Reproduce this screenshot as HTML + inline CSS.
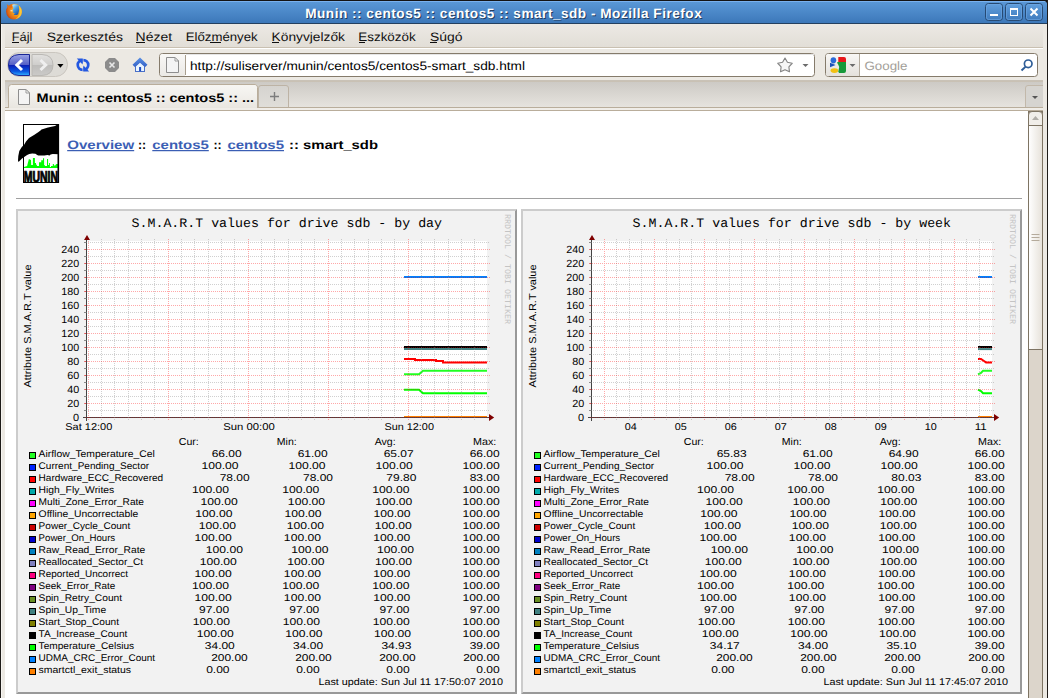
<!DOCTYPE html><html><head><meta charset="utf-8"><title>Munin :: centos5 :: centos5 :: smart_sdb</title><style>html,body{margin:0;padding:0;width:1048px;height:698px;overflow:hidden;background:#fff}svg{display:block}text{text-rendering:geometricPrecision}</style></head><body><svg width="1048" height="698" viewBox="0 0 1048 698"><rect x="0" y="0" width="1048" height="698" fill="#ece9e3"/><defs><linearGradient id="tb" x1="0" y1="0" x2="0" y2="1"><stop offset="0" stop-color="#5c9ad9"/><stop offset="1" stop-color="#3b76b8"/></linearGradient><linearGradient id="tabbar" x1="0" y1="0" x2="0" y2="1"><stop offset="0" stop-color="#cdcac5"/><stop offset="1" stop-color="#e7e4df"/></linearGradient><linearGradient id="acttab" x1="0" y1="0" x2="0" y2="1"><stop offset="0" stop-color="#f7f6f3"/><stop offset="0.5" stop-color="#f1efeb"/><stop offset="1" stop-color="#e9e6e0"/></linearGradient><linearGradient id="newtab" x1="0" y1="0" x2="0" y2="1"><stop offset="0" stop-color="#d5d3cf"/><stop offset="1" stop-color="#e0ded9"/></linearGradient><linearGradient id="thumb" x1="0" y1="0" x2="1" y2="0"><stop offset="0" stop-color="#ffffff"/><stop offset="1" stop-color="#e6e1d9"/></linearGradient><linearGradient id="back" x1="0" y1="0" x2="0" y2="1"><stop offset="0" stop-color="#8c9be8"/><stop offset="0.45" stop-color="#5d6fd6"/><stop offset="0.5" stop-color="#0d3fd0"/><stop offset="1" stop-color="#2a8cf5"/></linearGradient><linearGradient id="fwd" x1="0" y1="0" x2="0" y2="1"><stop offset="0" stop-color="#dcdcdc"/><stop offset="1" stop-color="#c4c4c4"/></linearGradient><linearGradient id="wbtn" x1="0" y1="0" x2="0" y2="1"><stop offset="0" stop-color="#62a0de"/><stop offset="1" stop-color="#3f7bbd"/></linearGradient></defs><rect x="0" y="0" width="1048" height="24" fill="url(#tb)"/><rect x="0" y="0" width="1048" height="1" fill="#141414"/><rect x="1" y="1" width="1046" height="1" fill="#79b1ee"/><rect x="0" y="23" width="1048" height="1" fill="#24405f"/><path d="M0 0 H4 Q0.5 0.5 0 4.5 Z" fill="#141414"/><path d="M1048 0 H1042 Q1047 0.8 1048 5.5 Z" fill="#141414"/><text x="306.2" y="19" font-family="Liberation Sans" font-weight="bold" font-size="13.6" fill="#1d3352" fill-opacity="0.9" textLength="396.5" lengthAdjust="spacing">Munin :: centos5 :: centos5 :: smart_sdb - Mozilla Firefox</text><text x="305.2" y="18" font-family="Liberation Sans" font-weight="bold" font-size="13.6" fill="#ffffff" textLength="396.5" lengthAdjust="spacing">Munin :: centos5 :: centos5 :: smart_sdb - Mozilla Firefox</text><defs><radialGradient id="ffg" cx="0.68" cy="0.42" r="0.75"><stop offset="0" stop-color="#ffe040"/><stop offset="0.35" stop-color="#f7a21e"/><stop offset="0.75" stop-color="#e06a14"/><stop offset="1" stop-color="#b8380c"/></radialGradient><linearGradient id="ffb" x1="0.2" y1="0" x2="0.8" y2="1"><stop offset="0" stop-color="#b4ecff"/><stop offset="0.4" stop-color="#4aa0e4"/><stop offset="1" stop-color="#1a4a9e"/></linearGradient></defs><circle cx="14" cy="11.6" r="7.9" fill="url(#ffg)"/><path d="M12.4 4.4 Q16 3.6 18.8 5.4 Q20 10 18.2 14.2 Q16 15.6 13.6 14.8 L14.8 13.2 L12.6 12.4 L13.4 11.2 L12.2 9.6 L13.6 8.4 L12.4 6.6 Z" fill="url(#ffb)"/><path d="M18.6 5.4 Q22 8.5 21.8 12.4 Q21.2 17.6 15.4 19.2 Q19.8 15.6 19.9 11.4 Q19.8 7.8 18.6 5.4 Z" fill="#ffd23a" opacity="0.8"/><path d="M6.8 4 L9.2 6.2 L11.2 5 L12.6 6.8 L11 8.4 L9.6 8 L8.4 9.6 Q7.2 7.6 6.8 4 Z" fill="#e66f16"/><path d="M10.2 10.2 L12.4 9.8 L12.8 11.2 L10.8 11.6 Z" fill="#ffd9a0"/><rect x="985.5" y="3.5" width="17" height="17" rx="3" fill="url(#wbtn)" stroke="#274a73"/><rect x="986.5" y="4.5" width="15" height="15" rx="2" fill="none" stroke="#6ea7e3" stroke-opacity="0.6"/><rect x="1005.5" y="3.5" width="17" height="17" rx="3" fill="url(#wbtn)" stroke="#274a73"/><rect x="1006.5" y="4.5" width="15" height="15" rx="2" fill="none" stroke="#6ea7e3" stroke-opacity="0.6"/><rect x="1025.5" y="3.5" width="17" height="17" rx="3" fill="url(#wbtn)" stroke="#274a73"/><rect x="1026.5" y="4.5" width="15" height="15" rx="2" fill="none" stroke="#6ea7e3" stroke-opacity="0.6"/><rect x="990" y="14" width="8" height="2" fill="#fff"/><rect x="1010.5" y="8.5" width="7" height="7" fill="none" stroke="#fff"/><rect x="1010" y="8" width="8" height="2" fill="#fff"/><path d="M1030.5 8.5 L1037.5 15.5 M1037.5 8.5 L1030.5 15.5" stroke="#fff" stroke-width="2"/><rect x="0" y="0" width="1" height="698" fill="#1e1b18"/><rect x="1047" y="0" width="1" height="698" fill="#1e1b18"/><rect x="1" y="24" width="1" height="674" fill="#f7f5f1"/><defs><linearGradient id="menug" x1="0" y1="0" x2="0" y2="1"><stop offset="0" stop-color="#ece9e4"/><stop offset="1" stop-color="#e2ded7"/></linearGradient></defs><rect x="5" y="24" width="1038" height="23" fill="url(#menug)"/><rect x="5" y="47" width="1038" height="1" fill="#c9c0b1"/><rect x="5" y="48" width="1038" height="1" fill="#ffffff"/><text x="11.8" y="41" font-family="Liberation Sans" font-size="12.2" fill="#101010" textLength="20.6" lengthAdjust="spacingAndGlyphs">Fájl</text><text x="46.8" y="41" font-family="Liberation Sans" font-size="12.2" fill="#101010" textLength="76.1" lengthAdjust="spacingAndGlyphs">Szerkesztés</text><text x="135.6" y="41" font-family="Liberation Sans" font-size="12.2" fill="#101010" textLength="36.5" lengthAdjust="spacingAndGlyphs">Nézet</text><text x="185.70000000000002" y="41" font-family="Liberation Sans" font-size="12.2" fill="#101010" textLength="72.0" lengthAdjust="spacingAndGlyphs">Előzmények</text><text x="271.59999999999997" y="41" font-family="Liberation Sans" font-size="12.2" fill="#101010" textLength="73.40000000000003" lengthAdjust="spacingAndGlyphs">Könyvjelzők</text><text x="358.29999999999995" y="41" font-family="Liberation Sans" font-size="12.2" fill="#101010" textLength="57.400000000000034" lengthAdjust="spacingAndGlyphs">Eszközök</text><text x="429.9" y="41" font-family="Liberation Sans" font-size="12.2" fill="#101010" textLength="32.5" lengthAdjust="spacingAndGlyphs">Súgó</text><rect x="12" y="42" width="7" height="1" fill="#101010"/><rect x="56" y="42" width="7" height="1" fill="#101010"/><rect x="136" y="42" width="9" height="1" fill="#101010"/><rect x="210" y="42" width="11" height="1" fill="#101010"/><rect x="272" y="42" width="7" height="1" fill="#101010"/><rect x="359" y="42" width="6" height="1" fill="#101010"/><rect x="430" y="42" width="7" height="1" fill="#101010"/><rect x="2" y="49" width="1045" height="31" fill="#ece9e3"/><rect x="5" y="80" width="1038" height="1" fill="#c9c2b7"/><defs><linearGradient id="back2" x1="0" y1="0" x2="0" y2="1"><stop offset="0" stop-color="#9aa3e6"/><stop offset="0.48" stop-color="#5560c6"/><stop offset="0.5" stop-color="#0a1cb4"/><stop offset="0.8" stop-color="#0a55e0"/><stop offset="1" stop-color="#30b0ff"/></linearGradient><linearGradient id="fwd2" x1="0" y1="0" x2="0" y2="1"><stop offset="0" stop-color="#e2e1df"/><stop offset="0.48" stop-color="#cfcecc"/><stop offset="0.5" stop-color="#bdbcba"/><stop offset="1" stop-color="#cbcac8"/></linearGradient></defs><rect x="7.5" y="52.5" width="60" height="24" rx="12" fill="#dddbd6" stroke="#cac6bf"/><path d="M29.5 54.5 H19 Q8.5 55 8.5 65 Q8.5 75 19 75.5 H29.5 Z" fill="url(#back2)" stroke="#1a2696"/><path d="M32 54.5 H42 Q53 55 53 65 Q53 75 42 75.5 H32 Z" fill="url(#fwd2)" stroke="#bab8b4"/><path d="M22 60 L16.8 65 L22 70" fill="none" stroke="#fff" stroke-width="3" stroke-linejoin="miter"/><path d="M40.5 60 L45.7 65 L40.5 70" fill="none" stroke="#efefef" stroke-width="3" stroke-linejoin="miter"/><path d="M57.3 64 H63.5 L60.4 67.8 Z" fill="#000"/><g fill="#2458e0"><path d="M82.6 58.8 A6.2 6.2 0 0 0 82.6 71.2 V68.5 A3.5 3.5 0 0 1 81.2 61.8 L82.6 63.6 Z"/><path d="M76.8 58.6 H82.6 V64.4 Z"/><path d="M83.4 71.2 A6.2 6.2 0 0 0 83.4 58.8 V61.5 A3.5 3.5 0 0 1 84.8 68.2 L83.4 66.4 Z"/><path d="M89.2 71.4 H83.4 V65.6 Z"/></g><path d="M109 58 H115 L119 62 V68 L115 72 H109 L105 68 V62 Z" fill="#8c8c8c"/><path d="M109.5 62.5 L114.5 67.5 M114.5 62.5 L109.5 67.5" stroke="#e8e8e8" stroke-width="1.6"/><defs><linearGradient id="roof" x1="0" y1="0" x2="0" y2="1"><stop offset="0" stop-color="#5a90e4"/><stop offset="1" stop-color="#3463c8"/></linearGradient></defs><path d="M135 65.5 L140 61.3 L145 65.5 V72 H135 Z" fill="#4a70c8"/><path d="M136 66.2 L140 62.8 L144 66.2 V71 H136 Z" fill="#eaf5ff"/><rect x="139.1" y="67" width="2" height="4.2" fill="#1d4cc4"/><path d="M140 57.5 L147.5 64.8 L145.2 67 L140 62.3 L134.8 67 L132.5 64.8 Z" fill="url(#roof)"/><rect x="159.5" y="53.5" width="655" height="23" rx="3" fill="#ffffff" stroke="#857b6b"/><defs><linearGradient id="ufav" x1="0" y1="0" x2="0" y2="1"><stop offset="0" stop-color="#f9f8f6"/><stop offset="1" stop-color="#ebe9e5"/></linearGradient></defs><path d="M160 56.5 A2.5 2.5 0 0 1 162.5 54 H185 V76 H162.5 A2.5 2.5 0 0 1 160 73.5 Z" fill="url(#ufav)"/><rect x="185" y="55" width="1" height="20" fill="#a89e8e"/><rect x="186" y="54" width="628" height="1" fill="#e6e6e6"/><path d="M166.5 57.5 H175 L178.5 61 V72.5 H166.5 Z" fill="#f4f4f4" stroke="#8e8e8e" stroke-linejoin="miter"/><path d="M175 57.5 V61 H178.5 Z" fill="#ffffff" stroke="#9a9a9a"/><text x="190" y="70" font-family="Liberation Sans" font-size="12.2" fill="#000" textLength="335" lengthAdjust="spacingAndGlyphs">http://suliserver/munin/centos5/centos5-smart_sdb.html</text><polygon points="785.00,58.00 787.41,62.28 792.23,63.25 788.90,66.87 789.47,71.75 785.00,69.70 780.53,71.75 781.10,66.87 777.77,63.25 782.59,62.28" fill="#f6f6f6" stroke="#858585" stroke-width="1.15" stroke-linejoin="round"/><path d="M802.5 64 H808.5 L805.5 67 Z" fill="#6b6b6b"/><rect x="825.5" y="53.5" width="212" height="23" rx="3" fill="#ffffff" stroke="#857b6b"/><path d="M826 56.5 A2.5 2.5 0 0 1 828.5 54 H859 V76 H828.5 A2.5 2.5 0 0 1 826 73.5 Z" fill="#ece9e4"/><rect x="859" y="54" width="1" height="22" fill="#b3ab9e"/><defs><linearGradient id="sfav" x1="0" y1="0" x2="0" y2="1"><stop offset="0" stop-color="#f8f7f5"/><stop offset="1" stop-color="#e4e1dc"/></linearGradient></defs><path d="M826 56.5 A2.5 2.5 0 0 1 828.5 54 H859 V76 H828.5 A2.5 2.5 0 0 1 826 73.5 Z" fill="url(#sfav)"/><path d="M838.3 57 H844 A2 2 0 0 1 846 59 V62.6 H838.3 Z" fill="#e8171b"/><path d="M837.2 62 H846 V71 A2 2 0 0 1 844 73 H839.2 Q837.6 72 838.6 70 Q840.2 67.2 838.3 64.8 Q837.2 63.5 837.2 62 Z" fill="#16993a"/><ellipse cx="833.4" cy="60.3" rx="2.8" ry="3.1" fill="#2a6ad8"/><path d="M830 62.8 L835.6 65 L830 67.2 Z" fill="#1d50b8"/><ellipse cx="834.4" cy="70.6" rx="3.8" ry="2.4" fill="#f2c012"/><path d="M849.5 64 H855.5 L852.5 67 Z" fill="#6b6b6b"/><text x="864.5" y="70" font-family="Liberation Sans" font-size="12.2" fill="#a29e98" textLength="43" lengthAdjust="spacingAndGlyphs">Google</text><circle cx="1028.2" cy="63.8" r="3.8" fill="none" stroke="#2e5d97" stroke-width="1.7"/><path d="M1025.6 66.6 L1021.5 70.5" stroke="#2e5d97" stroke-width="2"/><rect x="5" y="81" width="1038" height="1" fill="#c9c1b4"/><rect x="5" y="82" width="1038" height="26" fill="url(#tabbar)"/><rect x="5" y="107" width="1038" height="1" fill="#b9ad9b"/><rect x="5" y="108" width="1038" height="2" fill="#f0ede8"/><rect x="5" y="110" width="1038" height="1" fill="#b9ad9b"/><path d="M8.5 108 V87.5 A3 3 0 0 1 11.5 84.5 H254 A3 3 0 0 1 257.5 87.5 V108" fill="url(#acttab)" stroke="#b9ad9b"/><rect x="9" y="107" width="248" height="1" fill="#e9e6e0"/><path d="M18.5 89.5 H26 L29.5 93 V104.5 H18.5 Z" fill="#f4f4f4" stroke="#8e8e8e"/><path d="M26 89.5 V93 H29.5 Z" fill="#ffffff" stroke="#9a9a9a"/><text x="36.6" y="102" font-family="Liberation Sans" font-weight="bold" font-size="12.2" fill="#000" textLength="217.5" lengthAdjust="spacingAndGlyphs">Munin :: centos5 :: centos5 :: ...</text><path d="M258.5 107 V88 A2.5 2.5 0 0 1 261 85.5 H286 A2.5 2.5 0 0 1 288.5 88 V107" fill="url(#newtab)" stroke="#bdb3a5"/><path d="M270 96.5 H279 M274.5 92 V101" stroke="#7d7d7d" stroke-width="1.4"/><path d="M1025.5 107 V88 A2.5 2.5 0 0 1 1028 85.5 H1043 V107 Z" fill="#d6d4d0"/><path d="M1025.5 107 V88 A2.5 2.5 0 0 1 1028 85.5 H1043" fill="none" stroke="#c2b8aa"/><path d="M1032 96 H1038 L1035 99 Z" fill="#555"/><rect x="5" y="111" width="1023" height="587" fill="#ffffff"/><rect x="1028" y="111" width="15" height="587" fill="#dcd5cb"/><rect x="1028.5" y="111.5" width="14" height="587" fill="none" stroke="#7e7463"/><path d="M1028.5 125.5 V115 A3.5 3.5 0 0 1 1032 111.5 H1039 A3.5 3.5 0 0 1 1042.5 115 V125.5 Z" fill="#f1eee9" stroke="#7e7463"/><path d="M1032 120 L1035.5 116 L1039 120 Z" fill="#b1aea8"/><rect x="1028.5" y="125.5" width="14" height="224" fill="url(#thumb)" stroke="#7e7463"/><path d="M1031.5 234.5 H1039.5 M1031.5 237.5 H1039.5 M1031.5 240.5 H1039.5" stroke="#b5ab9c" stroke-width="1"/><rect x="23.5" y="124.5" width="35" height="58" fill="#fff" stroke="#000"/><path d="M59 124 L59 154.2 L52.8 154 L50.6 154.5 L49.6 155.4 L47.4 154.9 L44.5 155.4 L38.3 155.4 L37.2 154.9 L35.4 153.8 L32.2 153.5 L29.3 154 L27.1 154.9 L24.9 156.4 L23.5 157.4 L22 158.5 L20 160.6 L18.5 162 L18 160.6 L18.3 156 L19.3 151 L21.8 147 L24.3 144.5 L26 141.5 L29 138 L34 135 L38.5 132 L40.5 130.5 L41.5 129.5 L48 127.5 L55 126 L58 124 Z" fill="#000"/><path d="M24 168 L24 166.9 L27.1 166 L28.9 159 L31 160 L31.2 165 L32.9 165 L32.9 158 L34.9 158 L34.9 163 L36 163 L36 164.7 L36.9 164.7 L36.9 166 L39 166 L39 162.2 L41.2 162.2 L41.2 160.2 L43 160.2 L43 158.2 L44.1 158.2 L44.1 165 L44.8 165 L44.8 166 L47 166 L47 159 L48.1 159 L48.1 165 L49 165 L49 163 L49.9 163 L49.9 166.9 L51 166.9 L51 166 L52.8 166 L52.8 164 L53.9 164 L53.9 165.4 L55.4 165.4 L55.4 164.7 L56.1 164.7 L56.1 164 L58 164 L58 168 Z" fill="#00ff00"/><rect x="57.5" y="124" width="1.6" height="59" fill="#000"/><text x="23.8" y="182.4" font-family="Liberation Sans" font-weight="bold" font-size="15.8" fill="#000" stroke="#000" stroke-width="0.9" textLength="34.2" lengthAdjust="spacingAndGlyphs">MUNIN</text><text x="67.2" y="149" font-family="Liberation Sans" font-weight="bold" font-size="12.3" fill="#3b5eb4" textLength="67" lengthAdjust="spacingAndGlyphs" text-decoration="underline">Overview</text><text x="138" y="149" font-family="Liberation Sans" font-weight="bold" font-size="12.3" fill="#000">::</text><text x="152.3" y="149" font-family="Liberation Sans" font-weight="bold" font-size="12.3" fill="#3b5eb4" textLength="56.5" lengthAdjust="spacingAndGlyphs" text-decoration="underline">centos5</text><text x="213.5" y="149" font-family="Liberation Sans" font-weight="bold" font-size="12.3" fill="#000">::</text><text x="227.5" y="149" font-family="Liberation Sans" font-weight="bold" font-size="12.3" fill="#3b5eb4" textLength="56.5" lengthAdjust="spacingAndGlyphs" text-decoration="underline">centos5</text><text x="289" y="149" font-family="Liberation Sans" font-weight="bold" font-size="12.3" fill="#000" textLength="89" lengthAdjust="spacingAndGlyphs">:: smart_sdb</text><rect x="16" y="198" width="1006" height="1" fill="#a0a0a0"/><rect x="16" y="209" width="501" height="485" fill="#f2f2f2"/><path d="M16 694 V209 H517 L515 211 H18 V692 Z" fill="#cccccc"/><path d="M517 209 V694 H16 L18 692 H515 V211 Z" fill="#999999"/><rect x="87" y="241" width="400" height="176" fill="#ffffff"/><polyline points="404,347.00 487,347.00" fill="none" stroke="#000000" stroke-width="2" stroke-linejoin="miter"/><polyline points="404,349.10 487,349.10" fill="none" stroke="#408080" stroke-width="2" stroke-linejoin="miter"/><polyline points="404,347.00 487,347.00" fill="none" stroke="#000000" stroke-width="2" stroke-linejoin="miter"/><polyline points="404,358.90 415,358.90 415,359.95 436,359.95 436,361.00 443,361.00 443,362.40 487,362.40" fill="none" stroke="#ff0000" stroke-width="2" stroke-linejoin="miter"/><polyline points="404,374.30 419,374.30 423,370.80 487,370.80" fill="none" stroke="#22ff22" stroke-width="2" stroke-linejoin="miter"/><polyline points="404,389.70 419,389.70 423,393.20 487,393.20" fill="none" stroke="#00ff00" stroke-width="2" stroke-linejoin="miter"/><polyline points="404,277.00 487,277.00" fill="none" stroke="#0080ff" stroke-width="2" stroke-linejoin="miter"/><polyline points="404,417.00 487,417.00" fill="none" stroke="#ff8000" stroke-width="2" stroke-linejoin="miter"/><rect x="84" y="417" width="2" height="1" fill="#e08080"/><rect x="84" y="410" width="2" height="1" fill="#8a8a8a"/><rect x="84" y="403" width="2" height="1" fill="#e08080"/><rect x="84" y="396" width="2" height="1" fill="#8a8a8a"/><rect x="84" y="389" width="2" height="1" fill="#e08080"/><rect x="84" y="382" width="2" height="1" fill="#8a8a8a"/><rect x="84" y="375" width="2" height="1" fill="#e08080"/><rect x="84" y="368" width="2" height="1" fill="#8a8a8a"/><rect x="84" y="361" width="2" height="1" fill="#e08080"/><rect x="84" y="354" width="2" height="1" fill="#8a8a8a"/><rect x="84" y="347" width="2" height="1" fill="#e08080"/><rect x="84" y="340" width="2" height="1" fill="#8a8a8a"/><rect x="84" y="333" width="2" height="1" fill="#e08080"/><rect x="84" y="326" width="2" height="1" fill="#8a8a8a"/><rect x="84" y="319" width="2" height="1" fill="#e08080"/><rect x="84" y="312" width="2" height="1" fill="#8a8a8a"/><rect x="84" y="305" width="2" height="1" fill="#e08080"/><rect x="84" y="298" width="2" height="1" fill="#8a8a8a"/><rect x="84" y="291" width="2" height="1" fill="#e08080"/><rect x="84" y="284" width="2" height="1" fill="#8a8a8a"/><rect x="84" y="277" width="2" height="1" fill="#e08080"/><rect x="84" y="270" width="2" height="1" fill="#8a8a8a"/><rect x="84" y="263" width="2" height="1" fill="#e08080"/><rect x="84" y="256" width="2" height="1" fill="#8a8a8a"/><rect x="84" y="249" width="2" height="1" fill="#e08080"/><rect x="84" y="242" width="2" height="1" fill="#8a8a8a"/><rect x="83" y="417" width="406" height="1" fill="#444444"/><rect x="86" y="238" width="1" height="183" fill="#444444"/><path d="M84 410.5H490M84 396.5H490M84 382.5H490M84 368.5H490M84 354.5H490M84 340.5H490M84 326.5H490M84 312.5H490M84 298.5H490M84 284.5H490M84 270.5H490M84 256.5H490M84 242.5H490" stroke="#8f8f8f" stroke-opacity="0.42" stroke-dasharray="1 1" fill="none" shape-rendering="crispEdges"/><path d="M101.5 420V239M114.5 420V239M128.5 420V239M141.5 420V239M154.5 420V239M181.5 420V239M194.5 420V239M208.5 420V239M221.5 420V239M234.5 420V239M261.5 420V239M274.5 420V239M288.5 420V239M301.5 420V239M314.5 420V239M341.5 420V239M354.5 420V239M368.5 420V239M381.5 420V239M394.5 420V239M421.5 420V239M434.5 420V239M448.5 420V239M461.5 420V239M474.5 420V239" stroke="#8f8f8f" stroke-opacity="0.42" stroke-dasharray="1 1" fill="none" shape-rendering="crispEdges"/><path d="M85 417.5H490M85 403.5H490M85 389.5H490M85 375.5H490M85 361.5H490M85 347.5H490M85 333.5H490M85 319.5H490M85 305.5H490M85 291.5H490M85 277.5H490M85 263.5H490M85 249.5H490M88.5 420V239M168.5 420V239M248.5 420V239M328.5 420V239M408.5 420V239" stroke="#ff0000" stroke-opacity="0.34" stroke-dasharray="1 1" fill="none" shape-rendering="crispEdges"/><path d="M84 240 L90 240 L87 235 Z" fill="#7f0000"/><path d="M489 414 L494.2 417.5 L489 421 Z" fill="#7f0000"/><text x="79.2" y="420.8" font-family="Liberation Sans" font-size="10.4" fill="#000" text-anchor="end" textLength="6.1" lengthAdjust="spacingAndGlyphs">0</text><text x="79.2" y="406.8" font-family="Liberation Sans" font-size="10.4" fill="#000" text-anchor="end" textLength="12.0" lengthAdjust="spacingAndGlyphs">20</text><text x="79.2" y="392.8" font-family="Liberation Sans" font-size="10.4" fill="#000" text-anchor="end" textLength="12.0" lengthAdjust="spacingAndGlyphs">40</text><text x="79.2" y="378.8" font-family="Liberation Sans" font-size="10.4" fill="#000" text-anchor="end" textLength="12.0" lengthAdjust="spacingAndGlyphs">60</text><text x="79.2" y="364.8" font-family="Liberation Sans" font-size="10.4" fill="#000" text-anchor="end" textLength="12.0" lengthAdjust="spacingAndGlyphs">80</text><text x="79.2" y="350.8" font-family="Liberation Sans" font-size="10.4" fill="#000" text-anchor="end" textLength="17.9" lengthAdjust="spacingAndGlyphs">100</text><text x="79.2" y="336.8" font-family="Liberation Sans" font-size="10.4" fill="#000" text-anchor="end" textLength="17.9" lengthAdjust="spacingAndGlyphs">120</text><text x="79.2" y="322.8" font-family="Liberation Sans" font-size="10.4" fill="#000" text-anchor="end" textLength="17.9" lengthAdjust="spacingAndGlyphs">140</text><text x="79.2" y="308.8" font-family="Liberation Sans" font-size="10.4" fill="#000" text-anchor="end" textLength="17.9" lengthAdjust="spacingAndGlyphs">160</text><text x="79.2" y="294.8" font-family="Liberation Sans" font-size="10.4" fill="#000" text-anchor="end" textLength="17.9" lengthAdjust="spacingAndGlyphs">180</text><text x="79.2" y="280.8" font-family="Liberation Sans" font-size="10.4" fill="#000" text-anchor="end" textLength="17.9" lengthAdjust="spacingAndGlyphs">200</text><text x="79.2" y="266.8" font-family="Liberation Sans" font-size="10.4" fill="#000" text-anchor="end" textLength="17.9" lengthAdjust="spacingAndGlyphs">220</text><text x="79.2" y="252.8" font-family="Liberation Sans" font-size="10.4" fill="#000" text-anchor="end" textLength="17.9" lengthAdjust="spacingAndGlyphs">240</text><text x="88.8" y="430" font-family="Liberation Sans" font-size="9.9" fill="#000" text-anchor="middle" textLength="47" lengthAdjust="spacingAndGlyphs">Sat 12:00</text><text x="249" y="430" font-family="Liberation Sans" font-size="9.9" fill="#000" text-anchor="middle" textLength="51.5" lengthAdjust="spacingAndGlyphs">Sun 00:00</text><text x="409.2" y="430" font-family="Liberation Sans" font-size="9.9" fill="#000" text-anchor="middle" textLength="49.5" lengthAdjust="spacingAndGlyphs">Sun 12:00</text><text x="286.8" y="227" font-family="Liberation Mono" font-size="13" fill="#000" text-anchor="middle" textLength="310.5" lengthAdjust="spacingAndGlyphs">S.M.A.R.T values for drive sdb - by day</text><text transform="translate(31,387.5) rotate(-90)" font-family="Liberation Sans" font-size="10" fill="#000" textLength="123" lengthAdjust="spacingAndGlyphs">Attribute S.M.A.R.T value</text><text transform="translate(504.5,214) rotate(90)" font-family="Liberation Mono" font-size="8.6" fill="#c4c4c4" textLength="110" lengthAdjust="spacingAndGlyphs">RRDTOOL / TOBI OETIKER</text><text x="178.79999999999998" y="445" font-family="Liberation Sans" font-size="10.2" fill="#000" textLength="20.0" lengthAdjust="spacingAndGlyphs">Cur:</text><text x="276.8" y="445" font-family="Liberation Sans" font-size="10.2" fill="#000" textLength="19.899999999999977" lengthAdjust="spacingAndGlyphs">Min:</text><text x="374.7" y="445" font-family="Liberation Sans" font-size="10.2" fill="#000" textLength="21.0" lengthAdjust="spacingAndGlyphs">Avg:</text><text x="473.09999999999997" y="445" font-family="Liberation Sans" font-size="10.2" fill="#000" textLength="23.200000000000045" lengthAdjust="spacingAndGlyphs">Max:</text><rect x="29.5" y="452.5" width="6" height="6" fill="#22ff22" stroke="#000"/><text x="38.6" y="457" font-family="Liberation Sans" font-size="9.7" fill="#000" textLength="116.19999999999999" lengthAdjust="spacingAndGlyphs">Airflow_Temperature_Cel</text><text x="211.70" y="457" font-family="Liberation Sans" font-size="9.9" fill="#000" textLength="30.00" lengthAdjust="spacingAndGlyphs">66.00</text><text x="297.70" y="457" font-family="Liberation Sans" font-size="9.9" fill="#000" textLength="30.00" lengthAdjust="spacingAndGlyphs">61.00</text><text x="383.70" y="457" font-family="Liberation Sans" font-size="9.9" fill="#000" textLength="30.00" lengthAdjust="spacingAndGlyphs">65.07</text><text x="469.70" y="457" font-family="Liberation Sans" font-size="9.9" fill="#000" textLength="30.00" lengthAdjust="spacingAndGlyphs">66.00</text><rect x="29.5" y="464.5" width="6" height="6" fill="#0022ff" stroke="#000"/><text x="38.6" y="469" font-family="Liberation Sans" font-size="9.7" fill="#000" textLength="110.5" lengthAdjust="spacingAndGlyphs">Current_Pending_Sector</text><text x="201.45" y="469" font-family="Liberation Sans" font-size="9.9" fill="#000" textLength="37.15" lengthAdjust="spacingAndGlyphs">100.00</text><text x="288.48" y="469" font-family="Liberation Sans" font-size="9.9" fill="#000" textLength="37.15" lengthAdjust="spacingAndGlyphs">100.00</text><text x="375.52" y="469" font-family="Liberation Sans" font-size="9.9" fill="#000" textLength="37.15" lengthAdjust="spacingAndGlyphs">100.00</text><text x="462.55" y="469" font-family="Liberation Sans" font-size="9.9" fill="#000" textLength="37.15" lengthAdjust="spacingAndGlyphs">100.00</text><rect x="29.5" y="476.5" width="6" height="6" fill="#ff0000" stroke="#000"/><text x="38.6" y="481" font-family="Liberation Sans" font-size="9.7" fill="#000" textLength="124.6" lengthAdjust="spacingAndGlyphs">Hardware_ECC_Recovered</text><text x="219.70" y="481" font-family="Liberation Sans" font-size="9.9" fill="#000" textLength="30.00" lengthAdjust="spacingAndGlyphs">78.00</text><text x="303.03" y="481" font-family="Liberation Sans" font-size="9.9" fill="#000" textLength="30.00" lengthAdjust="spacingAndGlyphs">78.00</text><text x="386.37" y="481" font-family="Liberation Sans" font-size="9.9" fill="#000" textLength="30.00" lengthAdjust="spacingAndGlyphs">79.80</text><text x="469.70" y="481" font-family="Liberation Sans" font-size="9.9" fill="#000" textLength="30.00" lengthAdjust="spacingAndGlyphs">83.00</text><rect x="29.5" y="488.5" width="6" height="6" fill="#00aaaa" stroke="#000"/><text x="38.6" y="493" font-family="Liberation Sans" font-size="9.7" fill="#000" textLength="75.6" lengthAdjust="spacingAndGlyphs">High_Fly_Writes</text><text x="191.95" y="493" font-family="Liberation Sans" font-size="9.9" fill="#000" textLength="37.15" lengthAdjust="spacingAndGlyphs">100.00</text><text x="282.15" y="493" font-family="Liberation Sans" font-size="9.9" fill="#000" textLength="37.15" lengthAdjust="spacingAndGlyphs">100.00</text><text x="372.35" y="493" font-family="Liberation Sans" font-size="9.9" fill="#000" textLength="37.15" lengthAdjust="spacingAndGlyphs">100.00</text><text x="462.55" y="493" font-family="Liberation Sans" font-size="9.9" fill="#000" textLength="37.15" lengthAdjust="spacingAndGlyphs">100.00</text><rect x="29.5" y="500.5" width="6" height="6" fill="#ff00ff" stroke="#000"/><text x="38.6" y="505" font-family="Liberation Sans" font-size="9.7" fill="#000" textLength="105.4" lengthAdjust="spacingAndGlyphs">Multi_Zone_Error_Rate</text><text x="200.55" y="505" font-family="Liberation Sans" font-size="9.9" fill="#000" textLength="37.15" lengthAdjust="spacingAndGlyphs">100.00</text><text x="287.88" y="505" font-family="Liberation Sans" font-size="9.9" fill="#000" textLength="37.15" lengthAdjust="spacingAndGlyphs">100.00</text><text x="375.22" y="505" font-family="Liberation Sans" font-size="9.9" fill="#000" textLength="37.15" lengthAdjust="spacingAndGlyphs">100.00</text><text x="462.55" y="505" font-family="Liberation Sans" font-size="9.9" fill="#000" textLength="37.15" lengthAdjust="spacingAndGlyphs">100.00</text><rect x="29.5" y="512.5" width="6" height="6" fill="#ffa500" stroke="#000"/><text x="38.6" y="517" font-family="Liberation Sans" font-size="9.7" fill="#000" textLength="99.69999999999999" lengthAdjust="spacingAndGlyphs">Offline_Uncorrectable</text><text x="195.35" y="517" font-family="Liberation Sans" font-size="9.9" fill="#000" textLength="37.15" lengthAdjust="spacingAndGlyphs">100.00</text><text x="284.42" y="517" font-family="Liberation Sans" font-size="9.9" fill="#000" textLength="37.15" lengthAdjust="spacingAndGlyphs">100.00</text><text x="373.48" y="517" font-family="Liberation Sans" font-size="9.9" fill="#000" textLength="37.15" lengthAdjust="spacingAndGlyphs">100.00</text><text x="462.55" y="517" font-family="Liberation Sans" font-size="9.9" fill="#000" textLength="37.15" lengthAdjust="spacingAndGlyphs">100.00</text><rect x="29.5" y="524.5" width="6" height="6" fill="#cc0000" stroke="#000"/><text x="38.6" y="529" font-family="Liberation Sans" font-size="9.7" fill="#000" textLength="91.6" lengthAdjust="spacingAndGlyphs">Power_Cycle_Count</text><text x="198.85" y="529" font-family="Liberation Sans" font-size="9.9" fill="#000" textLength="37.15" lengthAdjust="spacingAndGlyphs">100.00</text><text x="286.75" y="529" font-family="Liberation Sans" font-size="9.9" fill="#000" textLength="37.15" lengthAdjust="spacingAndGlyphs">100.00</text><text x="374.65" y="529" font-family="Liberation Sans" font-size="9.9" fill="#000" textLength="37.15" lengthAdjust="spacingAndGlyphs">100.00</text><text x="462.55" y="529" font-family="Liberation Sans" font-size="9.9" fill="#000" textLength="37.15" lengthAdjust="spacingAndGlyphs">100.00</text><rect x="29.5" y="536.5" width="6" height="6" fill="#0000cc" stroke="#000"/><text x="38.6" y="541" font-family="Liberation Sans" font-size="9.7" fill="#000" textLength="76.6" lengthAdjust="spacingAndGlyphs">Power_On_Hours</text><text x="194.55" y="541" font-family="Liberation Sans" font-size="9.9" fill="#000" textLength="37.15" lengthAdjust="spacingAndGlyphs">100.00</text><text x="283.88" y="541" font-family="Liberation Sans" font-size="9.9" fill="#000" textLength="37.15" lengthAdjust="spacingAndGlyphs">100.00</text><text x="373.22" y="541" font-family="Liberation Sans" font-size="9.9" fill="#000" textLength="37.15" lengthAdjust="spacingAndGlyphs">100.00</text><text x="462.55" y="541" font-family="Liberation Sans" font-size="9.9" fill="#000" textLength="37.15" lengthAdjust="spacingAndGlyphs">100.00</text><rect x="29.5" y="548.5" width="6" height="6" fill="#0080c0" stroke="#000"/><text x="38.6" y="553" font-family="Liberation Sans" font-size="9.7" fill="#000" textLength="106.6" lengthAdjust="spacingAndGlyphs">Raw_Read_Error_Rate</text><text x="205.75" y="553" font-family="Liberation Sans" font-size="9.9" fill="#000" textLength="37.15" lengthAdjust="spacingAndGlyphs">100.00</text><text x="291.35" y="553" font-family="Liberation Sans" font-size="9.9" fill="#000" textLength="37.15" lengthAdjust="spacingAndGlyphs">100.00</text><text x="376.95" y="553" font-family="Liberation Sans" font-size="9.9" fill="#000" textLength="37.15" lengthAdjust="spacingAndGlyphs">100.00</text><text x="462.55" y="553" font-family="Liberation Sans" font-size="9.9" fill="#000" textLength="37.15" lengthAdjust="spacingAndGlyphs">100.00</text><rect x="29.5" y="560.5" width="6" height="6" fill="#8080c0" stroke="#000"/><text x="38.6" y="565" font-family="Liberation Sans" font-size="9.7" fill="#000" textLength="104.5" lengthAdjust="spacingAndGlyphs">Reallocated_Sector_Ct</text><text x="199.65" y="565" font-family="Liberation Sans" font-size="9.9" fill="#000" textLength="37.15" lengthAdjust="spacingAndGlyphs">100.00</text><text x="287.28" y="565" font-family="Liberation Sans" font-size="9.9" fill="#000" textLength="37.15" lengthAdjust="spacingAndGlyphs">100.00</text><text x="374.92" y="565" font-family="Liberation Sans" font-size="9.9" fill="#000" textLength="37.15" lengthAdjust="spacingAndGlyphs">100.00</text><text x="462.55" y="565" font-family="Liberation Sans" font-size="9.9" fill="#000" textLength="37.15" lengthAdjust="spacingAndGlyphs">100.00</text><rect x="29.5" y="572.5" width="6" height="6" fill="#ff0080" stroke="#000"/><text x="38.6" y="577" font-family="Liberation Sans" font-size="9.7" fill="#000" textLength="89.4" lengthAdjust="spacingAndGlyphs">Reported_Uncorrect</text><text x="194.55" y="577" font-family="Liberation Sans" font-size="9.9" fill="#000" textLength="37.15" lengthAdjust="spacingAndGlyphs">100.00</text><text x="283.88" y="577" font-family="Liberation Sans" font-size="9.9" fill="#000" textLength="37.15" lengthAdjust="spacingAndGlyphs">100.00</text><text x="373.22" y="577" font-family="Liberation Sans" font-size="9.9" fill="#000" textLength="37.15" lengthAdjust="spacingAndGlyphs">100.00</text><text x="462.55" y="577" font-family="Liberation Sans" font-size="9.9" fill="#000" textLength="37.15" lengthAdjust="spacingAndGlyphs">100.00</text><rect x="29.5" y="584.5" width="6" height="6" fill="#800080" stroke="#000"/><text x="38.6" y="589" font-family="Liberation Sans" font-size="9.7" fill="#000" textLength="76.6" lengthAdjust="spacingAndGlyphs">Seek_Error_Rate</text><text x="191.95" y="589" font-family="Liberation Sans" font-size="9.9" fill="#000" textLength="37.15" lengthAdjust="spacingAndGlyphs">100.00</text><text x="282.15" y="589" font-family="Liberation Sans" font-size="9.9" fill="#000" textLength="37.15" lengthAdjust="spacingAndGlyphs">100.00</text><text x="372.35" y="589" font-family="Liberation Sans" font-size="9.9" fill="#000" textLength="37.15" lengthAdjust="spacingAndGlyphs">100.00</text><text x="462.55" y="589" font-family="Liberation Sans" font-size="9.9" fill="#000" textLength="37.15" lengthAdjust="spacingAndGlyphs">100.00</text><rect x="29.5" y="596.5" width="6" height="6" fill="#688e23" stroke="#000"/><text x="38.6" y="601" font-family="Liberation Sans" font-size="9.7" fill="#000" textLength="83.5" lengthAdjust="spacingAndGlyphs">Spin_Retry_Count</text><text x="194.55" y="601" font-family="Liberation Sans" font-size="9.9" fill="#000" textLength="37.15" lengthAdjust="spacingAndGlyphs">100.00</text><text x="283.88" y="601" font-family="Liberation Sans" font-size="9.9" fill="#000" textLength="37.15" lengthAdjust="spacingAndGlyphs">100.00</text><text x="373.22" y="601" font-family="Liberation Sans" font-size="9.9" fill="#000" textLength="37.15" lengthAdjust="spacingAndGlyphs">100.00</text><text x="462.55" y="601" font-family="Liberation Sans" font-size="9.9" fill="#000" textLength="37.15" lengthAdjust="spacingAndGlyphs">100.00</text><rect x="29.5" y="608.5" width="6" height="6" fill="#408080" stroke="#000"/><text x="38.6" y="613" font-family="Liberation Sans" font-size="9.7" fill="#000" textLength="67.5" lengthAdjust="spacingAndGlyphs">Spin_Up_Time</text><text x="199.10" y="613" font-family="Liberation Sans" font-size="9.9" fill="#000" textLength="30.00" lengthAdjust="spacingAndGlyphs">97.00</text><text x="289.30" y="613" font-family="Liberation Sans" font-size="9.9" fill="#000" textLength="30.00" lengthAdjust="spacingAndGlyphs">97.00</text><text x="379.50" y="613" font-family="Liberation Sans" font-size="9.9" fill="#000" textLength="30.00" lengthAdjust="spacingAndGlyphs">97.00</text><text x="469.70" y="613" font-family="Liberation Sans" font-size="9.9" fill="#000" textLength="30.00" lengthAdjust="spacingAndGlyphs">97.00</text><rect x="29.5" y="620.5" width="6" height="6" fill="#808000" stroke="#000"/><text x="38.6" y="625" font-family="Liberation Sans" font-size="9.7" fill="#000" textLength="80.4" lengthAdjust="spacingAndGlyphs">Start_Stop_Count</text><text x="192.85" y="625" font-family="Liberation Sans" font-size="9.9" fill="#000" textLength="37.15" lengthAdjust="spacingAndGlyphs">100.00</text><text x="282.75" y="625" font-family="Liberation Sans" font-size="9.9" fill="#000" textLength="37.15" lengthAdjust="spacingAndGlyphs">100.00</text><text x="372.65" y="625" font-family="Liberation Sans" font-size="9.9" fill="#000" textLength="37.15" lengthAdjust="spacingAndGlyphs">100.00</text><text x="462.55" y="625" font-family="Liberation Sans" font-size="9.9" fill="#000" textLength="37.15" lengthAdjust="spacingAndGlyphs">100.00</text><rect x="29.5" y="632.5" width="6" height="6" fill="#000000" stroke="#000"/><text x="38.6" y="637" font-family="Liberation Sans" font-size="9.7" fill="#000" textLength="88.69999999999999" lengthAdjust="spacingAndGlyphs">TA_Increase_Count</text><text x="196.65" y="637" font-family="Liberation Sans" font-size="9.9" fill="#000" textLength="37.15" lengthAdjust="spacingAndGlyphs">100.00</text><text x="285.28" y="637" font-family="Liberation Sans" font-size="9.9" fill="#000" textLength="37.15" lengthAdjust="spacingAndGlyphs">100.00</text><text x="373.92" y="637" font-family="Liberation Sans" font-size="9.9" fill="#000" textLength="37.15" lengthAdjust="spacingAndGlyphs">100.00</text><text x="462.55" y="637" font-family="Liberation Sans" font-size="9.9" fill="#000" textLength="37.15" lengthAdjust="spacingAndGlyphs">100.00</text><rect x="29.5" y="644.5" width="6" height="6" fill="#00ff00" stroke="#000"/><text x="38.6" y="649" font-family="Liberation Sans" font-size="9.7" fill="#000" textLength="95.6" lengthAdjust="spacingAndGlyphs">Temperature_Celsius</text><text x="204.80" y="649" font-family="Liberation Sans" font-size="9.9" fill="#000" textLength="30.00" lengthAdjust="spacingAndGlyphs">34.00</text><text x="293.10" y="649" font-family="Liberation Sans" font-size="9.9" fill="#000" textLength="30.00" lengthAdjust="spacingAndGlyphs">34.00</text><text x="381.40" y="649" font-family="Liberation Sans" font-size="9.9" fill="#000" textLength="30.00" lengthAdjust="spacingAndGlyphs">34.93</text><text x="469.70" y="649" font-family="Liberation Sans" font-size="9.9" fill="#000" textLength="30.00" lengthAdjust="spacingAndGlyphs">39.00</text><rect x="29.5" y="656.5" width="6" height="6" fill="#0080ff" stroke="#000"/><text x="38.6" y="661" font-family="Liberation Sans" font-size="9.7" fill="#000" textLength="116.5" lengthAdjust="spacingAndGlyphs">UDMA_CRC_Error_Count</text><text x="211.15" y="661" font-family="Liberation Sans" font-size="9.9" fill="#000" textLength="36.55" lengthAdjust="spacingAndGlyphs">200.00</text><text x="295.15" y="661" font-family="Liberation Sans" font-size="9.9" fill="#000" textLength="36.55" lengthAdjust="spacingAndGlyphs">200.00</text><text x="379.15" y="661" font-family="Liberation Sans" font-size="9.9" fill="#000" textLength="36.55" lengthAdjust="spacingAndGlyphs">200.00</text><text x="463.15" y="661" font-family="Liberation Sans" font-size="9.9" fill="#000" textLength="36.55" lengthAdjust="spacingAndGlyphs">200.00</text><rect x="29.5" y="668.5" width="6" height="6" fill="#ff8000" stroke="#000"/><text x="38.6" y="673" font-family="Liberation Sans" font-size="9.7" fill="#000" textLength="92.5" lengthAdjust="spacingAndGlyphs">smartctl_exit_status</text><text x="206.15" y="673" font-family="Liberation Sans" font-size="9.9" fill="#000" textLength="23.45" lengthAdjust="spacingAndGlyphs">0.00</text><text x="296.18" y="673" font-family="Liberation Sans" font-size="9.9" fill="#000" textLength="23.45" lengthAdjust="spacingAndGlyphs">0.00</text><text x="386.22" y="673" font-family="Liberation Sans" font-size="9.9" fill="#000" textLength="23.45" lengthAdjust="spacingAndGlyphs">0.00</text><text x="476.25" y="673" font-family="Liberation Sans" font-size="9.9" fill="#000" textLength="23.45" lengthAdjust="spacingAndGlyphs">0.00</text><text x="318.4" y="685" font-family="Liberation Sans" font-size="9.7" fill="#000" textLength="184.5" lengthAdjust="spacingAndGlyphs">Last update: Sun Jul 11 17:50:07 2010</text><rect x="521" y="209" width="501" height="485" fill="#f2f2f2"/><path d="M521 694 V209 H1022 L1020 211 H523 V692 Z" fill="#cccccc"/><path d="M1022 209 V694 H521 L523 692 H1020 V211 Z" fill="#999999"/><rect x="592" y="241" width="400" height="176" fill="#ffffff"/><polyline points="978,349.10 992,349.10" fill="none" stroke="#408080" stroke-width="2"/><polyline points="978,347.00 992,347.00" fill="none" stroke="#000000" stroke-width="2"/><polyline points="978,358.90 981,358.90 984,361.00 986,362.40 992,362.40" fill="none" stroke="#ff0000" stroke-width="2"/><polyline points="978,374.30 981,372.90 983,370.80 992,370.80" fill="none" stroke="#22ff22" stroke-width="2"/><polyline points="978,389.70 981,391.10 983,393.20 992,393.20" fill="none" stroke="#00ff00" stroke-width="2"/><polyline points="978,277.00 992,277.00" fill="none" stroke="#0080ff" stroke-width="2"/><polyline points="978,417.00 992,417.00" fill="none" stroke="#ff8000" stroke-width="2"/><rect x="589" y="417" width="2" height="1" fill="#e08080"/><rect x="589" y="410" width="2" height="1" fill="#8a8a8a"/><rect x="589" y="403" width="2" height="1" fill="#e08080"/><rect x="589" y="396" width="2" height="1" fill="#8a8a8a"/><rect x="589" y="389" width="2" height="1" fill="#e08080"/><rect x="589" y="382" width="2" height="1" fill="#8a8a8a"/><rect x="589" y="375" width="2" height="1" fill="#e08080"/><rect x="589" y="368" width="2" height="1" fill="#8a8a8a"/><rect x="589" y="361" width="2" height="1" fill="#e08080"/><rect x="589" y="354" width="2" height="1" fill="#8a8a8a"/><rect x="589" y="347" width="2" height="1" fill="#e08080"/><rect x="589" y="340" width="2" height="1" fill="#8a8a8a"/><rect x="589" y="333" width="2" height="1" fill="#e08080"/><rect x="589" y="326" width="2" height="1" fill="#8a8a8a"/><rect x="589" y="319" width="2" height="1" fill="#e08080"/><rect x="589" y="312" width="2" height="1" fill="#8a8a8a"/><rect x="589" y="305" width="2" height="1" fill="#e08080"/><rect x="589" y="298" width="2" height="1" fill="#8a8a8a"/><rect x="589" y="291" width="2" height="1" fill="#e08080"/><rect x="589" y="284" width="2" height="1" fill="#8a8a8a"/><rect x="589" y="277" width="2" height="1" fill="#e08080"/><rect x="589" y="270" width="2" height="1" fill="#8a8a8a"/><rect x="589" y="263" width="2" height="1" fill="#e08080"/><rect x="589" y="256" width="2" height="1" fill="#8a8a8a"/><rect x="589" y="249" width="2" height="1" fill="#e08080"/><rect x="589" y="242" width="2" height="1" fill="#8a8a8a"/><rect x="588" y="417" width="406" height="1" fill="#444444"/><rect x="591" y="238" width="1" height="183" fill="#444444"/><path d="M589 410.5H995M589 396.5H995M589 382.5H995M589 368.5H995M589 354.5H995M589 340.5H995M589 326.5H995M589 312.5H995M589 298.5H995M589 284.5H995M589 270.5H995M589 256.5H995M589 242.5H995" stroke="#8f8f8f" stroke-opacity="0.42" stroke-dasharray="1 1" fill="none" shape-rendering="crispEdges"/><path d="M616.5 420V239M629.5 420V239M641.5 420V239M666.5 420V239M679.5 420V239M691.5 420V239M716.5 420V239M729.5 420V239M741.5 420V239M766.5 420V239M779.5 420V239M791.5 420V239M816.5 420V239M829.5 420V239M841.5 420V239M866.5 420V239M879.5 420V239M891.5 420V239M916.5 420V239M929.5 420V239M941.5 420V239M966.5 420V239M979.5 420V239" stroke="#8f8f8f" stroke-opacity="0.42" stroke-dasharray="1 1" fill="none" shape-rendering="crispEdges"/><path d="M590 417.5H995M590 403.5H995M590 389.5H995M590 375.5H995M590 361.5H995M590 347.5H995M590 333.5H995M590 319.5H995M590 305.5H995M590 291.5H995M590 277.5H995M590 263.5H995M590 249.5H995M604.5 420V239M654.5 420V239M704.5 420V239M754.5 420V239M804.5 420V239M854.5 420V239M904.5 420V239M954.5 420V239" stroke="#ff0000" stroke-opacity="0.34" stroke-dasharray="1 1" fill="none" shape-rendering="crispEdges"/><path d="M589 240 L595 240 L592 235 Z" fill="#7f0000"/><path d="M994 414 L999.2 417.5 L994 421 Z" fill="#7f0000"/><text x="584.2" y="420.8" font-family="Liberation Sans" font-size="10.4" fill="#000" text-anchor="end" textLength="6.1" lengthAdjust="spacingAndGlyphs">0</text><text x="584.2" y="406.8" font-family="Liberation Sans" font-size="10.4" fill="#000" text-anchor="end" textLength="12.0" lengthAdjust="spacingAndGlyphs">20</text><text x="584.2" y="392.8" font-family="Liberation Sans" font-size="10.4" fill="#000" text-anchor="end" textLength="12.0" lengthAdjust="spacingAndGlyphs">40</text><text x="584.2" y="378.8" font-family="Liberation Sans" font-size="10.4" fill="#000" text-anchor="end" textLength="12.0" lengthAdjust="spacingAndGlyphs">60</text><text x="584.2" y="364.8" font-family="Liberation Sans" font-size="10.4" fill="#000" text-anchor="end" textLength="12.0" lengthAdjust="spacingAndGlyphs">80</text><text x="584.2" y="350.8" font-family="Liberation Sans" font-size="10.4" fill="#000" text-anchor="end" textLength="17.9" lengthAdjust="spacingAndGlyphs">100</text><text x="584.2" y="336.8" font-family="Liberation Sans" font-size="10.4" fill="#000" text-anchor="end" textLength="17.9" lengthAdjust="spacingAndGlyphs">120</text><text x="584.2" y="322.8" font-family="Liberation Sans" font-size="10.4" fill="#000" text-anchor="end" textLength="17.9" lengthAdjust="spacingAndGlyphs">140</text><text x="584.2" y="308.8" font-family="Liberation Sans" font-size="10.4" fill="#000" text-anchor="end" textLength="17.9" lengthAdjust="spacingAndGlyphs">160</text><text x="584.2" y="294.8" font-family="Liberation Sans" font-size="10.4" fill="#000" text-anchor="end" textLength="17.9" lengthAdjust="spacingAndGlyphs">180</text><text x="584.2" y="280.8" font-family="Liberation Sans" font-size="10.4" fill="#000" text-anchor="end" textLength="17.9" lengthAdjust="spacingAndGlyphs">200</text><text x="584.2" y="266.8" font-family="Liberation Sans" font-size="10.4" fill="#000" text-anchor="end" textLength="17.9" lengthAdjust="spacingAndGlyphs">220</text><text x="584.2" y="252.8" font-family="Liberation Sans" font-size="10.4" fill="#000" text-anchor="end" textLength="17.9" lengthAdjust="spacingAndGlyphs">240</text><text x="630.8" y="430" font-family="Liberation Sans" font-size="9.9" fill="#000" text-anchor="middle" textLength="12" lengthAdjust="spacingAndGlyphs">04</text><text x="680.8" y="430" font-family="Liberation Sans" font-size="9.9" fill="#000" text-anchor="middle" textLength="12" lengthAdjust="spacingAndGlyphs">05</text><text x="730.8" y="430" font-family="Liberation Sans" font-size="9.9" fill="#000" text-anchor="middle" textLength="12" lengthAdjust="spacingAndGlyphs">06</text><text x="780.8" y="430" font-family="Liberation Sans" font-size="9.9" fill="#000" text-anchor="middle" textLength="12" lengthAdjust="spacingAndGlyphs">07</text><text x="830.8" y="430" font-family="Liberation Sans" font-size="9.9" fill="#000" text-anchor="middle" textLength="12" lengthAdjust="spacingAndGlyphs">08</text><text x="880.8" y="430" font-family="Liberation Sans" font-size="9.9" fill="#000" text-anchor="middle" textLength="12" lengthAdjust="spacingAndGlyphs">09</text><text x="930.8" y="430" font-family="Liberation Sans" font-size="9.9" fill="#000" text-anchor="middle" textLength="12" lengthAdjust="spacingAndGlyphs">10</text><text x="980.8" y="430" font-family="Liberation Sans" font-size="9.9" fill="#000" text-anchor="middle" textLength="12" lengthAdjust="spacingAndGlyphs">11</text><text x="791.8" y="227" font-family="Liberation Mono" font-size="13" fill="#000" text-anchor="middle" textLength="318.5" lengthAdjust="spacingAndGlyphs">S.M.A.R.T values for drive sdb - by week</text><text transform="translate(536,387.5) rotate(-90)" font-family="Liberation Sans" font-size="10" fill="#000" textLength="123" lengthAdjust="spacingAndGlyphs">Attribute S.M.A.R.T value</text><text transform="translate(1009.5,214) rotate(90)" font-family="Liberation Mono" font-size="8.6" fill="#c4c4c4" textLength="110" lengthAdjust="spacingAndGlyphs">RRDTOOL / TOBI OETIKER</text><text x="683.8" y="445" font-family="Liberation Sans" font-size="10.2" fill="#000" textLength="20.0" lengthAdjust="spacingAndGlyphs">Cur:</text><text x="781.8" y="445" font-family="Liberation Sans" font-size="10.2" fill="#000" textLength="19.899999999999977" lengthAdjust="spacingAndGlyphs">Min:</text><text x="879.7" y="445" font-family="Liberation Sans" font-size="10.2" fill="#000" textLength="21.0" lengthAdjust="spacingAndGlyphs">Avg:</text><text x="978.0999999999999" y="445" font-family="Liberation Sans" font-size="10.2" fill="#000" textLength="23.200000000000045" lengthAdjust="spacingAndGlyphs">Max:</text><rect x="534.5" y="452.5" width="6" height="6" fill="#22ff22" stroke="#000"/><text x="543.6" y="457" font-family="Liberation Sans" font-size="9.7" fill="#000" textLength="116.19999999999999" lengthAdjust="spacingAndGlyphs">Airflow_Temperature_Cel</text><text x="716.70" y="457" font-family="Liberation Sans" font-size="9.9" fill="#000" textLength="30.00" lengthAdjust="spacingAndGlyphs">65.83</text><text x="802.70" y="457" font-family="Liberation Sans" font-size="9.9" fill="#000" textLength="30.00" lengthAdjust="spacingAndGlyphs">61.00</text><text x="888.70" y="457" font-family="Liberation Sans" font-size="9.9" fill="#000" textLength="30.00" lengthAdjust="spacingAndGlyphs">64.90</text><text x="974.70" y="457" font-family="Liberation Sans" font-size="9.9" fill="#000" textLength="30.00" lengthAdjust="spacingAndGlyphs">66.00</text><rect x="534.5" y="464.5" width="6" height="6" fill="#0022ff" stroke="#000"/><text x="543.6" y="469" font-family="Liberation Sans" font-size="9.7" fill="#000" textLength="110.5" lengthAdjust="spacingAndGlyphs">Current_Pending_Sector</text><text x="706.45" y="469" font-family="Liberation Sans" font-size="9.9" fill="#000" textLength="37.15" lengthAdjust="spacingAndGlyphs">100.00</text><text x="793.48" y="469" font-family="Liberation Sans" font-size="9.9" fill="#000" textLength="37.15" lengthAdjust="spacingAndGlyphs">100.00</text><text x="880.52" y="469" font-family="Liberation Sans" font-size="9.9" fill="#000" textLength="37.15" lengthAdjust="spacingAndGlyphs">100.00</text><text x="967.55" y="469" font-family="Liberation Sans" font-size="9.9" fill="#000" textLength="37.15" lengthAdjust="spacingAndGlyphs">100.00</text><rect x="534.5" y="476.5" width="6" height="6" fill="#ff0000" stroke="#000"/><text x="543.6" y="481" font-family="Liberation Sans" font-size="9.7" fill="#000" textLength="124.6" lengthAdjust="spacingAndGlyphs">Hardware_ECC_Recovered</text><text x="724.70" y="481" font-family="Liberation Sans" font-size="9.9" fill="#000" textLength="30.00" lengthAdjust="spacingAndGlyphs">78.00</text><text x="808.03" y="481" font-family="Liberation Sans" font-size="9.9" fill="#000" textLength="30.00" lengthAdjust="spacingAndGlyphs">78.00</text><text x="891.37" y="481" font-family="Liberation Sans" font-size="9.9" fill="#000" textLength="30.00" lengthAdjust="spacingAndGlyphs">80.03</text><text x="974.70" y="481" font-family="Liberation Sans" font-size="9.9" fill="#000" textLength="30.00" lengthAdjust="spacingAndGlyphs">83.00</text><rect x="534.5" y="488.5" width="6" height="6" fill="#00aaaa" stroke="#000"/><text x="543.6" y="493" font-family="Liberation Sans" font-size="9.7" fill="#000" textLength="75.6" lengthAdjust="spacingAndGlyphs">High_Fly_Writes</text><text x="696.95" y="493" font-family="Liberation Sans" font-size="9.9" fill="#000" textLength="37.15" lengthAdjust="spacingAndGlyphs">100.00</text><text x="787.15" y="493" font-family="Liberation Sans" font-size="9.9" fill="#000" textLength="37.15" lengthAdjust="spacingAndGlyphs">100.00</text><text x="877.35" y="493" font-family="Liberation Sans" font-size="9.9" fill="#000" textLength="37.15" lengthAdjust="spacingAndGlyphs">100.00</text><text x="967.55" y="493" font-family="Liberation Sans" font-size="9.9" fill="#000" textLength="37.15" lengthAdjust="spacingAndGlyphs">100.00</text><rect x="534.5" y="500.5" width="6" height="6" fill="#ff00ff" stroke="#000"/><text x="543.6" y="505" font-family="Liberation Sans" font-size="9.7" fill="#000" textLength="105.4" lengthAdjust="spacingAndGlyphs">Multi_Zone_Error_Rate</text><text x="705.55" y="505" font-family="Liberation Sans" font-size="9.9" fill="#000" textLength="37.15" lengthAdjust="spacingAndGlyphs">100.00</text><text x="792.88" y="505" font-family="Liberation Sans" font-size="9.9" fill="#000" textLength="37.15" lengthAdjust="spacingAndGlyphs">100.00</text><text x="880.22" y="505" font-family="Liberation Sans" font-size="9.9" fill="#000" textLength="37.15" lengthAdjust="spacingAndGlyphs">100.00</text><text x="967.55" y="505" font-family="Liberation Sans" font-size="9.9" fill="#000" textLength="37.15" lengthAdjust="spacingAndGlyphs">100.00</text><rect x="534.5" y="512.5" width="6" height="6" fill="#ffa500" stroke="#000"/><text x="543.6" y="517" font-family="Liberation Sans" font-size="9.7" fill="#000" textLength="99.69999999999999" lengthAdjust="spacingAndGlyphs">Offline_Uncorrectable</text><text x="700.35" y="517" font-family="Liberation Sans" font-size="9.9" fill="#000" textLength="37.15" lengthAdjust="spacingAndGlyphs">100.00</text><text x="789.42" y="517" font-family="Liberation Sans" font-size="9.9" fill="#000" textLength="37.15" lengthAdjust="spacingAndGlyphs">100.00</text><text x="878.48" y="517" font-family="Liberation Sans" font-size="9.9" fill="#000" textLength="37.15" lengthAdjust="spacingAndGlyphs">100.00</text><text x="967.55" y="517" font-family="Liberation Sans" font-size="9.9" fill="#000" textLength="37.15" lengthAdjust="spacingAndGlyphs">100.00</text><rect x="534.5" y="524.5" width="6" height="6" fill="#cc0000" stroke="#000"/><text x="543.6" y="529" font-family="Liberation Sans" font-size="9.7" fill="#000" textLength="91.6" lengthAdjust="spacingAndGlyphs">Power_Cycle_Count</text><text x="703.85" y="529" font-family="Liberation Sans" font-size="9.9" fill="#000" textLength="37.15" lengthAdjust="spacingAndGlyphs">100.00</text><text x="791.75" y="529" font-family="Liberation Sans" font-size="9.9" fill="#000" textLength="37.15" lengthAdjust="spacingAndGlyphs">100.00</text><text x="879.65" y="529" font-family="Liberation Sans" font-size="9.9" fill="#000" textLength="37.15" lengthAdjust="spacingAndGlyphs">100.00</text><text x="967.55" y="529" font-family="Liberation Sans" font-size="9.9" fill="#000" textLength="37.15" lengthAdjust="spacingAndGlyphs">100.00</text><rect x="534.5" y="536.5" width="6" height="6" fill="#0000cc" stroke="#000"/><text x="543.6" y="541" font-family="Liberation Sans" font-size="9.7" fill="#000" textLength="76.6" lengthAdjust="spacingAndGlyphs">Power_On_Hours</text><text x="699.55" y="541" font-family="Liberation Sans" font-size="9.9" fill="#000" textLength="37.15" lengthAdjust="spacingAndGlyphs">100.00</text><text x="788.88" y="541" font-family="Liberation Sans" font-size="9.9" fill="#000" textLength="37.15" lengthAdjust="spacingAndGlyphs">100.00</text><text x="878.22" y="541" font-family="Liberation Sans" font-size="9.9" fill="#000" textLength="37.15" lengthAdjust="spacingAndGlyphs">100.00</text><text x="967.55" y="541" font-family="Liberation Sans" font-size="9.9" fill="#000" textLength="37.15" lengthAdjust="spacingAndGlyphs">100.00</text><rect x="534.5" y="548.5" width="6" height="6" fill="#0080c0" stroke="#000"/><text x="543.6" y="553" font-family="Liberation Sans" font-size="9.7" fill="#000" textLength="106.6" lengthAdjust="spacingAndGlyphs">Raw_Read_Error_Rate</text><text x="710.75" y="553" font-family="Liberation Sans" font-size="9.9" fill="#000" textLength="37.15" lengthAdjust="spacingAndGlyphs">100.00</text><text x="796.35" y="553" font-family="Liberation Sans" font-size="9.9" fill="#000" textLength="37.15" lengthAdjust="spacingAndGlyphs">100.00</text><text x="881.95" y="553" font-family="Liberation Sans" font-size="9.9" fill="#000" textLength="37.15" lengthAdjust="spacingAndGlyphs">100.00</text><text x="967.55" y="553" font-family="Liberation Sans" font-size="9.9" fill="#000" textLength="37.15" lengthAdjust="spacingAndGlyphs">100.00</text><rect x="534.5" y="560.5" width="6" height="6" fill="#8080c0" stroke="#000"/><text x="543.6" y="565" font-family="Liberation Sans" font-size="9.7" fill="#000" textLength="104.5" lengthAdjust="spacingAndGlyphs">Reallocated_Sector_Ct</text><text x="704.65" y="565" font-family="Liberation Sans" font-size="9.9" fill="#000" textLength="37.15" lengthAdjust="spacingAndGlyphs">100.00</text><text x="792.28" y="565" font-family="Liberation Sans" font-size="9.9" fill="#000" textLength="37.15" lengthAdjust="spacingAndGlyphs">100.00</text><text x="879.92" y="565" font-family="Liberation Sans" font-size="9.9" fill="#000" textLength="37.15" lengthAdjust="spacingAndGlyphs">100.00</text><text x="967.55" y="565" font-family="Liberation Sans" font-size="9.9" fill="#000" textLength="37.15" lengthAdjust="spacingAndGlyphs">100.00</text><rect x="534.5" y="572.5" width="6" height="6" fill="#ff0080" stroke="#000"/><text x="543.6" y="577" font-family="Liberation Sans" font-size="9.7" fill="#000" textLength="89.4" lengthAdjust="spacingAndGlyphs">Reported_Uncorrect</text><text x="699.55" y="577" font-family="Liberation Sans" font-size="9.9" fill="#000" textLength="37.15" lengthAdjust="spacingAndGlyphs">100.00</text><text x="788.88" y="577" font-family="Liberation Sans" font-size="9.9" fill="#000" textLength="37.15" lengthAdjust="spacingAndGlyphs">100.00</text><text x="878.22" y="577" font-family="Liberation Sans" font-size="9.9" fill="#000" textLength="37.15" lengthAdjust="spacingAndGlyphs">100.00</text><text x="967.55" y="577" font-family="Liberation Sans" font-size="9.9" fill="#000" textLength="37.15" lengthAdjust="spacingAndGlyphs">100.00</text><rect x="534.5" y="584.5" width="6" height="6" fill="#800080" stroke="#000"/><text x="543.6" y="589" font-family="Liberation Sans" font-size="9.7" fill="#000" textLength="76.6" lengthAdjust="spacingAndGlyphs">Seek_Error_Rate</text><text x="696.95" y="589" font-family="Liberation Sans" font-size="9.9" fill="#000" textLength="37.15" lengthAdjust="spacingAndGlyphs">100.00</text><text x="787.15" y="589" font-family="Liberation Sans" font-size="9.9" fill="#000" textLength="37.15" lengthAdjust="spacingAndGlyphs">100.00</text><text x="877.35" y="589" font-family="Liberation Sans" font-size="9.9" fill="#000" textLength="37.15" lengthAdjust="spacingAndGlyphs">100.00</text><text x="967.55" y="589" font-family="Liberation Sans" font-size="9.9" fill="#000" textLength="37.15" lengthAdjust="spacingAndGlyphs">100.00</text><rect x="534.5" y="596.5" width="6" height="6" fill="#688e23" stroke="#000"/><text x="543.6" y="601" font-family="Liberation Sans" font-size="9.7" fill="#000" textLength="83.5" lengthAdjust="spacingAndGlyphs">Spin_Retry_Count</text><text x="699.55" y="601" font-family="Liberation Sans" font-size="9.9" fill="#000" textLength="37.15" lengthAdjust="spacingAndGlyphs">100.00</text><text x="788.88" y="601" font-family="Liberation Sans" font-size="9.9" fill="#000" textLength="37.15" lengthAdjust="spacingAndGlyphs">100.00</text><text x="878.22" y="601" font-family="Liberation Sans" font-size="9.9" fill="#000" textLength="37.15" lengthAdjust="spacingAndGlyphs">100.00</text><text x="967.55" y="601" font-family="Liberation Sans" font-size="9.9" fill="#000" textLength="37.15" lengthAdjust="spacingAndGlyphs">100.00</text><rect x="534.5" y="608.5" width="6" height="6" fill="#408080" stroke="#000"/><text x="543.6" y="613" font-family="Liberation Sans" font-size="9.7" fill="#000" textLength="67.5" lengthAdjust="spacingAndGlyphs">Spin_Up_Time</text><text x="704.10" y="613" font-family="Liberation Sans" font-size="9.9" fill="#000" textLength="30.00" lengthAdjust="spacingAndGlyphs">97.00</text><text x="794.30" y="613" font-family="Liberation Sans" font-size="9.9" fill="#000" textLength="30.00" lengthAdjust="spacingAndGlyphs">97.00</text><text x="884.50" y="613" font-family="Liberation Sans" font-size="9.9" fill="#000" textLength="30.00" lengthAdjust="spacingAndGlyphs">97.00</text><text x="974.70" y="613" font-family="Liberation Sans" font-size="9.9" fill="#000" textLength="30.00" lengthAdjust="spacingAndGlyphs">97.00</text><rect x="534.5" y="620.5" width="6" height="6" fill="#808000" stroke="#000"/><text x="543.6" y="625" font-family="Liberation Sans" font-size="9.7" fill="#000" textLength="80.4" lengthAdjust="spacingAndGlyphs">Start_Stop_Count</text><text x="697.85" y="625" font-family="Liberation Sans" font-size="9.9" fill="#000" textLength="37.15" lengthAdjust="spacingAndGlyphs">100.00</text><text x="787.75" y="625" font-family="Liberation Sans" font-size="9.9" fill="#000" textLength="37.15" lengthAdjust="spacingAndGlyphs">100.00</text><text x="877.65" y="625" font-family="Liberation Sans" font-size="9.9" fill="#000" textLength="37.15" lengthAdjust="spacingAndGlyphs">100.00</text><text x="967.55" y="625" font-family="Liberation Sans" font-size="9.9" fill="#000" textLength="37.15" lengthAdjust="spacingAndGlyphs">100.00</text><rect x="534.5" y="632.5" width="6" height="6" fill="#000000" stroke="#000"/><text x="543.6" y="637" font-family="Liberation Sans" font-size="9.7" fill="#000" textLength="88.69999999999999" lengthAdjust="spacingAndGlyphs">TA_Increase_Count</text><text x="701.65" y="637" font-family="Liberation Sans" font-size="9.9" fill="#000" textLength="37.15" lengthAdjust="spacingAndGlyphs">100.00</text><text x="790.28" y="637" font-family="Liberation Sans" font-size="9.9" fill="#000" textLength="37.15" lengthAdjust="spacingAndGlyphs">100.00</text><text x="878.92" y="637" font-family="Liberation Sans" font-size="9.9" fill="#000" textLength="37.15" lengthAdjust="spacingAndGlyphs">100.00</text><text x="967.55" y="637" font-family="Liberation Sans" font-size="9.9" fill="#000" textLength="37.15" lengthAdjust="spacingAndGlyphs">100.00</text><rect x="534.5" y="644.5" width="6" height="6" fill="#00ff00" stroke="#000"/><text x="543.6" y="649" font-family="Liberation Sans" font-size="9.7" fill="#000" textLength="95.6" lengthAdjust="spacingAndGlyphs">Temperature_Celsius</text><text x="709.80" y="649" font-family="Liberation Sans" font-size="9.9" fill="#000" textLength="30.00" lengthAdjust="spacingAndGlyphs">34.17</text><text x="798.10" y="649" font-family="Liberation Sans" font-size="9.9" fill="#000" textLength="30.00" lengthAdjust="spacingAndGlyphs">34.00</text><text x="886.40" y="649" font-family="Liberation Sans" font-size="9.9" fill="#000" textLength="30.00" lengthAdjust="spacingAndGlyphs">35.10</text><text x="974.70" y="649" font-family="Liberation Sans" font-size="9.9" fill="#000" textLength="30.00" lengthAdjust="spacingAndGlyphs">39.00</text><rect x="534.5" y="656.5" width="6" height="6" fill="#0080ff" stroke="#000"/><text x="543.6" y="661" font-family="Liberation Sans" font-size="9.7" fill="#000" textLength="116.5" lengthAdjust="spacingAndGlyphs">UDMA_CRC_Error_Count</text><text x="716.15" y="661" font-family="Liberation Sans" font-size="9.9" fill="#000" textLength="36.55" lengthAdjust="spacingAndGlyphs">200.00</text><text x="800.15" y="661" font-family="Liberation Sans" font-size="9.9" fill="#000" textLength="36.55" lengthAdjust="spacingAndGlyphs">200.00</text><text x="884.15" y="661" font-family="Liberation Sans" font-size="9.9" fill="#000" textLength="36.55" lengthAdjust="spacingAndGlyphs">200.00</text><text x="968.15" y="661" font-family="Liberation Sans" font-size="9.9" fill="#000" textLength="36.55" lengthAdjust="spacingAndGlyphs">200.00</text><rect x="534.5" y="668.5" width="6" height="6" fill="#ff8000" stroke="#000"/><text x="543.6" y="673" font-family="Liberation Sans" font-size="9.7" fill="#000" textLength="92.5" lengthAdjust="spacingAndGlyphs">smartctl_exit_status</text><text x="711.15" y="673" font-family="Liberation Sans" font-size="9.9" fill="#000" textLength="23.45" lengthAdjust="spacingAndGlyphs">0.00</text><text x="801.18" y="673" font-family="Liberation Sans" font-size="9.9" fill="#000" textLength="23.45" lengthAdjust="spacingAndGlyphs">0.00</text><text x="891.22" y="673" font-family="Liberation Sans" font-size="9.9" fill="#000" textLength="23.45" lengthAdjust="spacingAndGlyphs">0.00</text><text x="981.25" y="673" font-family="Liberation Sans" font-size="9.9" fill="#000" textLength="23.45" lengthAdjust="spacingAndGlyphs">0.00</text><text x="823.4" y="685" font-family="Liberation Sans" font-size="9.7" fill="#000" textLength="184.5" lengthAdjust="spacingAndGlyphs">Last update: Sun Jul 11 17:45:07 2010</text></svg></body></html>
